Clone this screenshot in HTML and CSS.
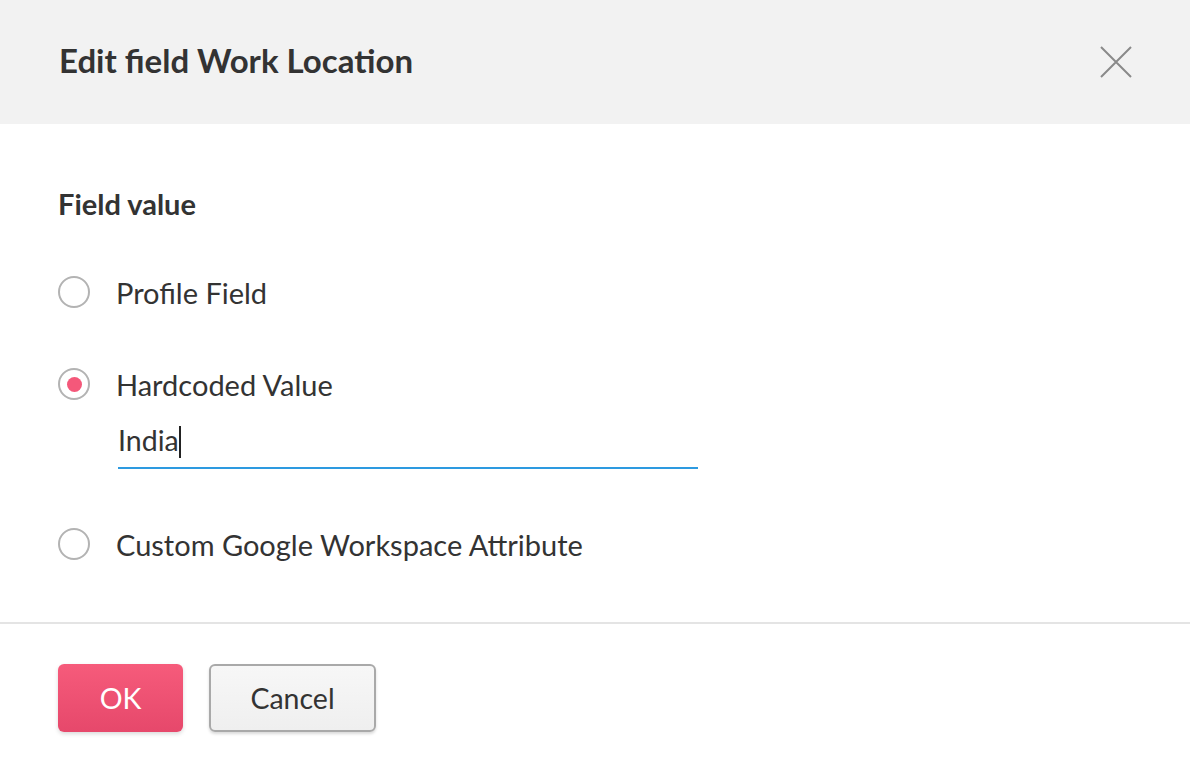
FILE: index.html
```html
<!DOCTYPE html>
<html lang="en">
<head>
    <meta charset="UTF-8">
    <title>Edit field</title>
    <link rel="stylesheet" href="styles.css">
</head>
<body>
    <div class="dialog">
        <div class="dialog-header">
            <h1 class="dialog-title">Edit field Work Location</h1>
            <button class="close-btn" aria-label="Close">
                <svg width="32" height="32" viewBox="0 0 32 32">
                    <path d="M1 1 L31 31 M31 1 L1 31" stroke="#8a8a8a" stroke-width="2" fill="none"/>
                </svg>
            </button>
        </div>

        <div class="dialog-body">
            <h2 class="section-title">Field value</h2>

            <label class="option">
                <input type="radio" name="source" class="radio">
                <span class="option-label">Profile Field</span>
            </label>

            <label class="option">
                <input type="radio" name="source" class="radio" checked>
                <span class="option-label">Hardcoded Value</span>
            </label>
            <div class="text-field">India<span class="caret"></span></div>

            <label class="option">
                <input type="radio" name="source" class="radio">
                <span class="option-label">Custom Google Workspace Attribute</span>
            </label>
        </div>

        <div class="dialog-footer">
            <button class="btn btn-primary">OK</button>
            <button class="btn btn-secondary">Cancel</button>
        </div>
    </div>
</body>
</html>
```

FILE: styles.css
```css
* {
    box-sizing: border-box;
    margin: 0;
    padding: 0;
}

body {
    background: #fff;
    font-family: Lato, "Open Sans", sans-serif;
    color: #333;
}

.dialog {
    width: 1190px;
    min-height: 770px;
    background: #fff;
}

.dialog-header {
    height: 124px;
    background: #f2f2f2;
    display: flex;
    align-items: center;
    justify-content: space-between;
    padding: 0 58px 4px 59px;
}

.dialog-title {
    font-size: 33px;
    font-weight: 700;
    color: #333;
}

.close-btn {
    background: none;
    border: none;
    width: 32px;
    height: 32px;
    margin-top: 4px;
    cursor: pointer;
}

.dialog-body {
    padding: 65px 58px 58px;
    border-bottom: 2px solid #e4e4e4;
}

.section-title {
    font-size: 29px;
    font-weight: 700;
    line-height: 30px;
    color: #333;
}

.option {
    display: flex;
    align-items: center;
    height: 40px;
    margin-top: 52px;
    cursor: pointer;
}

.section-title + .option {
    margin-top: 53px;
}

.radio {
    appearance: none;
    -webkit-appearance: none;
    width: 32px;
    height: 32px;
    border: 2px solid #b3b3b3;
    border-radius: 50%;
    background: #fff;
    display: flex;
    align-items: center;
    justify-content: center;
    margin-right: 26px;
    flex-shrink: 0;
}

.radio:checked::after {
    content: "";
    width: 15px;
    height: 15px;
    border-radius: 50%;
    background: #f4587a;
}

.option-label {
    font-size: 29px;
    color: #333;
}

.text-field {
    margin: 14px 0 0 60px;
    width: 580px;
    height: 51px;
    font-size: 28.5px;
    line-height: 44px;
    border-bottom: 2px solid #2d9ae0;
    color: #333;
}

.caret {
    display: inline-block;
    width: 2px;
    height: 32px;
    background: #222;
    vertical-align: -7px;
}

.text-field + .option {
    margin-top: 55px;
}

.dialog-footer {
    display: flex;
    gap: 26px;
    padding: 40px 58px;
}

.btn {
    height: 68px;
    border-radius: 6px;
    font-family: Lato, "Open Sans", sans-serif;
    font-size: 28.5px;
    cursor: pointer;
}

.btn-primary {
    width: 125px;
    border: none;
    color: #fff;
    background: linear-gradient(#f65b7b, #e6486b);
    box-shadow: 0 2px 4px rgba(0,0,0,0.15);
}

.btn-secondary {
    width: 167px;
    border: 2px solid #a9a9a9;
    color: #333;
    background: linear-gradient(#f7f7f7, #efefef);
    box-shadow: 0 2px 3px rgba(0,0,0,0.15);
}
```
